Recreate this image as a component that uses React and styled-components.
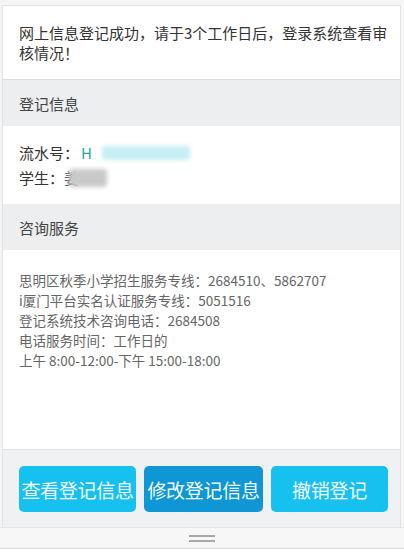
import React from 'react';
import styled, { createGlobalStyle } from 'styled-components';

const GlobalStyle = createGlobalStyle`
  html, body {
    margin: 0;
    padding: 0;
    background: #ffffff;
  }
  body {
    font-family: "Noto Sans CJK SC", "Noto Sans", sans-serif;
    color: #333;
  }
`;

const Page = styled.div`
  width: 404px;
  height: 556px;
  display: flex;
  flex-direction: column;
  background: #f5f5f5;
  padding-top: 5px;
  box-sizing: border-box;
`;

const Card = styled.div`
  flex: 1;
  margin: 0 3px 0 2px;
  display: flex;
  flex-direction: column;
  background: #fff;
  border: 1px solid #e2e2e2;
  border-bottom: none;
`;

const Notice = styled.div`
  padding: 17px 4px 16px 16px;
  font-size: 15px;
  line-height: 20px;
  color: #333;
  border-bottom: 1px solid #dcdcdc;
`;

const SectionHead = styled.div`
  height: 46px;
  display: flex;
  align-items: center;
  padding: 0 16px;
  font-size: 15px;
  color: #444;
  background: #eceef0;
`;

const InfoBody = styled.div`
  padding: 14px 16px 14px;
  font-size: 15px;
  line-height: 25px;
  color: #333;
`;

const Row = styled.div`
  display: flex;
  align-items: center;
`;

const Serial = styled.span`
  color: #2aa3a8;
  margin-left: 2px;
`;

const Blur = styled.span`
  display: inline-block;
  width: ${(p) => p.w}px;
  height: ${(p) => p.h}px;
  margin-left: ${(p) => p.ml || 0}px;
  background: ${(p) => p.color};
  filter: blur(2px);
  border-radius: 3px;
`;

const ContactBody = styled.div`
  flex: 1;
  padding: 20px 16px;
  font-size: 13.5px;
  line-height: 20px;
  color: #666;
`;

const ButtonBar = styled.div`
  display: grid;
  grid-template-columns: 117px 119px 117px;
  gap: 8px;
  padding: 16px 14px 15px 16px;
  background: #f0f1f3;
  border-top: 1px solid #e2e2e2;
`;

const ActionButton = styled.button`
  height: 46px;
  padding: 0;
  border: none;
  border-radius: 5px;
  background: ${(p) => (p.dark ? '#0e97d4' : '#16c1f0')};
  color: #f4fbff;
  font-family: "Noto Sans CJK SC", sans-serif;
  font-size: 19px;
  white-space: nowrap;
  overflow: visible;
  letter-spacing: -0.3px;
`;

const Handle = styled.div`
  height: 20px;
  display: flex;
  flex-direction: column;
  align-items: center;
  justify-content: center;
  gap: 3px;
  background: #f7f7f7;
  border-top: 1px solid #e4e4e4;
  border-bottom: 1px solid #dadada;
`;

const HandleLine = styled.span`
  width: 26px;
  height: 2px;
  background: #a8a8a8;
`;

const Bottom = styled.div`
  height: 7px;
  background: #fff;
`;

const contacts = [
  '思明区秋季小学招生服务专线：2684510、5862707',
  'i厦门平台实名认证服务专线：5051516',
  '登记系统技术咨询电话：2684508',
  '电话服务时间：工作日的',
  '上午 8:00-12:00-下午 15:00-18:00',
];

const App = () => {
  return (
    <>
      <GlobalStyle />
      <Page>
        <Card>
          <Notice>网上信息登记成功，请于3个工作日后，登录系统查看审核情况！</Notice>

          <SectionHead>登记信息</SectionHead>
          <InfoBody>
            <Row>
              流水号：<Serial>H</Serial>
              <Blur w={88} h={14} ml={10} color="#c6eef5" />
            </Row>
            <Row>
              学生：<span style={{ color: '#555' }}>姜</span>
              <Blur w={38} h={18} ml={-10} color="#c9c9c9" />
            </Row>
          </InfoBody>

          <SectionHead>咨询服务</SectionHead>
          <ContactBody>
            {contacts.map((line) => (
              <div key={line}>{line}</div>
            ))}
          </ContactBody>

          <ButtonBar>
            <ActionButton>查看登记信息</ActionButton>
            <ActionButton dark>修改登记信息</ActionButton>
            <ActionButton>撤销登记</ActionButton>
          </ButtonBar>
        </Card>
        <Handle>
          <HandleLine />
          <HandleLine />
        </Handle>
        <Bottom />
      </Page>
    </>
  );
};

export default App;
